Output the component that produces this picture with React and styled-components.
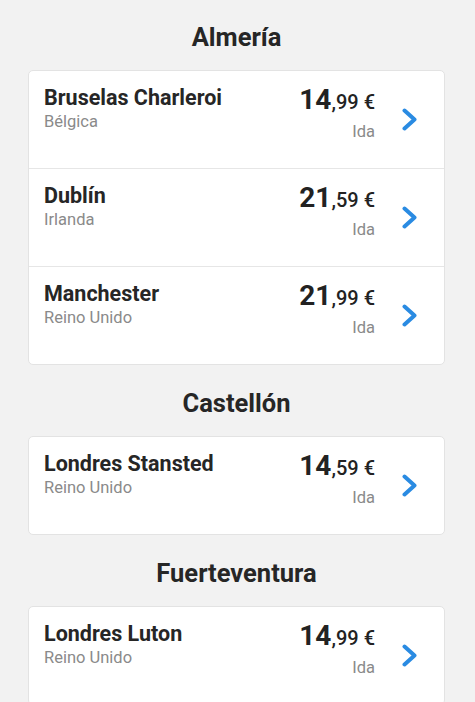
import styled, { createGlobalStyle } from 'styled-components';

const sections = [
  {
    origin: 'Almería',
    routes: [
      { city: 'Bruselas Charleroi', country: 'Bélgica', euros: '14', cents: '99' },
      { city: 'Dublín', country: 'Irlanda', euros: '21', cents: '59' },
      { city: 'Manchester', country: 'Reino Unido', euros: '21', cents: '99' },
    ],
  },
  {
    origin: 'Castellón',
    routes: [{ city: 'Londres Stansted', country: 'Reino Unido', euros: '14', cents: '59' }],
  },
  {
    origin: 'Fuerteventura',
    routes: [{ city: 'Londres Luton', country: 'Reino Unido', euros: '14', cents: '99' }],
  },
];

export default function App() {
  return (
    <>
      <GlobalStyle />
      <Page>
        {sections.map((section) => (
          <Section key={section.origin}>
            <Origin>{section.origin}</Origin>
            <Card>
              {section.routes.map((route) => (
                <Row key={route.city}>
                  <Destination>
                    <City>{route.city}</City>
                    <Country>{route.country}</Country>
                  </Destination>
                  <Fare>
                    <Price>
                      <Euros>{route.euros}</Euros>
                      <Cents>,{route.cents} €</Cents>
                    </Price>
                    <Trip>Ida</Trip>
                  </Fare>
                  <Chevron viewBox="0 0 15 23">
                    <path d="M2.5 2.5 L12.5 11.5 L2.5 20.5" />
                  </Chevron>
                </Row>
              ))}
            </Card>
          </Section>
        ))}
      </Page>
    </>
  );
}

const GlobalStyle = createGlobalStyle`
  body {
    margin: 0;
    background: #f2f2f2;
    font-family: Roboto, 'Liberation Sans', sans-serif;
    color: #232323;
  }
`;

const Page = styled.div`
  padding: 0 30px 0 28px;
`;

const Section = styled.section`
  display: flex;
  flex-direction: column;

  & + & {
    margin-top: 1px;
  }
`;

const Origin = styled.h2`
  margin: 0;
  padding: 22px 0 18px;
  font-size: 25.5px;
  line-height: 30px;
  font-weight: 700;
  text-align: center;
  color: #262626;
`;

const Card = styled.div`
  background: #fff;
  border: 1px solid #e3e3e3;
  border-radius: 5px;
`;

const Row = styled.div`
  display: flex;
  align-items: center;
  box-sizing: border-box;
  height: 98px;
  padding: 0 27px 0 15px;

  &:first-child {
    height: 97px;
  }

  & + & {
    border-top: 1px solid #e6e6e6;
  }
`;

const Destination = styled.div`
  flex: 1;
  align-self: flex-start;
  padding-top: 14px;
`;

const City = styled.div`
  font-size: 21.5px;
  line-height: 25px;
  font-weight: 700;
  color: #262626;
`;

const Country = styled.div`
  margin-top: 2px;
  font-size: 16.5px;
  line-height: 20px;
  color: #8a8a8a;
`;

const Fare = styled.div`
  align-self: flex-start;
  padding-top: 13px;
  text-align: right;
`;

const Price = styled.div`
  line-height: 32px;
  white-space: nowrap;
  color: #222;
`;

const Euros = styled.span`
  font-size: 28px;
  font-weight: 700;
`;

const Cents = styled.span`
  font-size: 20px;
  font-weight: 500;
`;

const Trip = styled.div`
  margin-top: 2px;
  font-size: 16.5px;
  line-height: 20px;
  color: #8a8a8a;
`;

const Chevron = styled.svg`
  width: 15px;
  height: 23px;
  margin-left: 27px;
  flex: none;

  path {
    fill: none;
    stroke: #2a8be2;
    stroke-width: 4;
    stroke-linecap: round;
    stroke-linejoin: round;
  }
`;
